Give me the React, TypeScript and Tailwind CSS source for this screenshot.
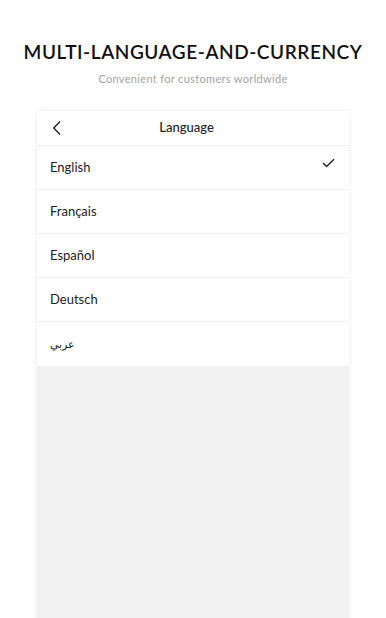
const languages = ["English", "Français", "Español", "Deutsch", "عربي"];

export default function App() {
  return (
    <main className="h-[618px] overflow-hidden bg-white font-['Lato','Noto_Sans',sans-serif] text-[#1a1a1a]">
      <div className="pt-[38px] text-center">
        <h1 className="text-[19px] font-semibold tracking-[0.03em] text-[#111]">
          MULTI-LANGUAGE-AND-CURRENCY
        </h1>
        <p className="mt-[4px] text-[11px] tracking-[0.03em] text-[#a3a3a3]">
          Convenient for customers worldwide
        </p>
      </div>

      <div className="mx-auto mt-[24px] flex h-[520px] w-[312px] flex-col bg-[#f1f1f1] shadow-[0_0_6px_rgba(0,0,0,0.08)]">
        <div className="flex h-[35px] items-center border-b border-[#ececec] bg-white px-[14px]">
          <svg width="10" height="16" viewBox="0 0 10 16" fill="none" className="ml-[1px]">
            <path d="M8 1.5 1.8 8 8 14.5" stroke="#222" strokeWidth="1.4" />
          </svg>
          <span className="flex-1 pr-[24px] text-center text-[13px] font-medium text-[#222]">Language</span>
        </div>
        {languages.map((lang, i) => (
          <div
            key={lang}
            className={
              "flex h-[44px] items-center bg-white pl-[13px] pr-[14px] text-[13px] text-[#222] " +
              (i < languages.length - 1 ? "border-b border-[#efefef]" : "")
            }
          >
            <span className={"flex-1 " + (i === languages.length - 1 ? "text-[11px]" : "")}>{lang}</span>
            {i === 0 && (
              <svg width="13" height="10" viewBox="0 0 13 10" fill="none" className="-mt-[10px]">
                <path d="M1 5 4.6 8.6 12 1.2" stroke="#222" strokeWidth="1.4" />
              </svg>
            )}
          </div>
        ))}
      </div>
    </main>
  );
}
